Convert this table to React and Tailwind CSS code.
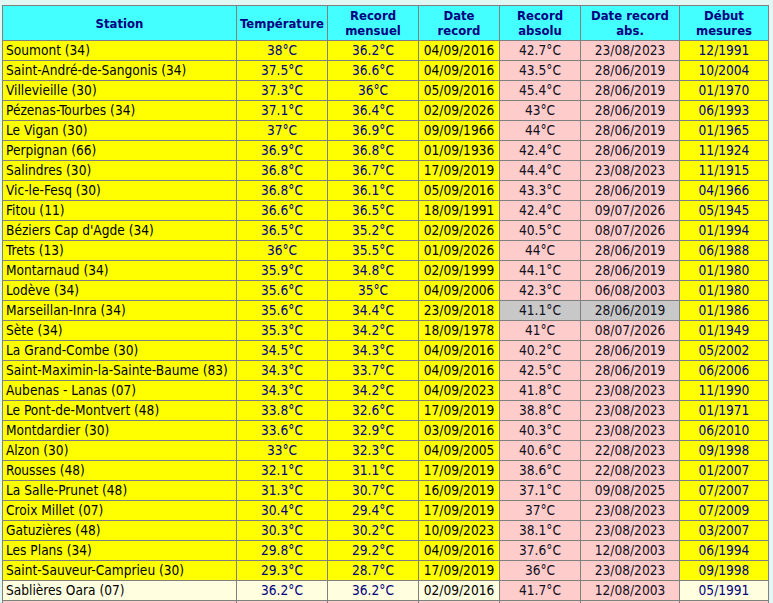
const rows = [
	['Soumont (34)', '38°C', '36.2°C', '04/09/2016', '42.7°C', '23/08/2023', '12/1991'],
	['Saint-André-de-Sangonis (34)', '37.5°C', '36.6°C', '04/09/2016', '43.5°C', '28/06/2019', '10/2004'],
	['Villevieille (30)', '37.3°C', '36°C', '05/09/2016', '45.4°C', '28/06/2019', '01/1970'],
	['Pézenas-Tourbes (34)', '37.1°C', '36.4°C', '02/09/2026', '43°C', '28/06/2019', '06/1993'],
	['Le Vigan (30)', '37°C', '36.9°C', '09/09/1966', '44°C', '28/06/2019', '01/1965'],
	['Perpignan (66)', '36.9°C', '36.8°C', '01/09/1936', '42.4°C', '28/06/2019', '11/1924'],
	['Salindres (30)', '36.8°C', '36.7°C', '17/09/2019', '44.4°C', '23/08/2023', '11/1915'],
	['Vic-le-Fesq (30)', '36.8°C', '36.1°C', '05/09/2016', '43.3°C', '28/06/2019', '04/1966'],
	['Fitou (11)', '36.6°C', '36.5°C', '18/09/1991', '42.4°C', '09/07/2026', '05/1945'],
	["Béziers Cap d'Agde (34)", '36.5°C', '35.2°C', '02/09/2026', '40.5°C', '08/07/2026', '01/1994'],
	['Trets (13)', '36°C', '35.5°C', '01/09/2026', '44°C', '28/06/2019', '06/1988'],
	['Montarnaud (34)', '35.9°C', '34.8°C', '02/09/1999', '44.1°C', '28/06/2019', '01/1980'],
	['Lodève (34)', '35.6°C', '35°C', '04/09/2006', '42.3°C', '06/08/2003', '01/1980'],
	['Marseillan-Inra (34)', '35.6°C', '34.4°C', '23/09/2018', '41.1°C', '28/06/2019', '01/1986', 'gray'],
	['Sète (34)', '35.3°C', '34.2°C', '18/09/1978', '41°C', '08/07/2026', '01/1949'],
	['La Grand-Combe (30)', '34.5°C', '34.3°C', '04/09/2016', '40.2°C', '28/06/2019', '05/2002'],
	['Saint-Maximin-la-Sainte-Baume (83)', '34.3°C', '33.7°C', '04/09/2016', '42.5°C', '28/06/2019', '06/2006'],
	['Aubenas - Lanas (07)', '34.3°C', '34.2°C', '04/09/2023', '41.8°C', '23/08/2023', '11/1990'],
	['Le Pont-de-Montvert (48)', '33.8°C', '32.6°C', '17/09/2019', '38.8°C', '23/08/2023', '01/1971'],
	['Montdardier (30)', '33.6°C', '32.9°C', '03/09/2016', '40.3°C', '23/08/2023', '06/2010'],
	['Alzon (30)', '33°C', '32.3°C', '04/09/2005', '40.6°C', '22/08/2023', '09/1998'],
	['Rousses (48)', '32.1°C', '31.1°C', '17/09/2019', '38.6°C', '22/08/2023', '01/2007'],
	['La Salle-Prunet (48)', '31.3°C', '30.7°C', '16/09/2019', '37.1°C', '09/08/2025', '07/2007'],
	['Croix Millet (07)', '30.4°C', '29.4°C', '17/09/2019', '37°C', '23/08/2023', '07/2009'],
	['Gatuzières (48)', '30.3°C', '30.2°C', '10/09/2023', '38.1°C', '23/08/2023', '03/2007'],
	['Les Plans (34)', '29.8°C', '29.2°C', '04/09/2016', '37.6°C', '12/08/2003', '06/1994'],
	['Saint-Sauveur-Camprieu (30)', '29.3°C', '28.7°C', '17/09/2019', '36°C', '23/08/2023', '09/1998'],
	['Sablières Oara (07)', '36.2°C', '36.2°C', '02/09/2016', '41.7°C', '12/08/2003', '05/1991', 'pale'],
];

const cell = 'border border-[#808080] h-[19px] p-0 leading-[19px] whitespace-nowrap overflow-hidden';

function Row({ r }) {
	const [station, temp, mens, dateRec, abs, dateAbs, debut, kind] = r;
	// pale = last station, not in the heat list
	const main = kind === 'pale' ? 'bg-[#ffffe0]' : 'bg-[#ffff00]';
	const rec = kind === 'gray' ? 'bg-[#c8c8c8]' : 'bg-[#ffcccc]';
	return (
		<tr>
			<td className={`${cell} ${main} pl-[3px] text-left text-black`}>{station}</td>
			<td className={`${cell} ${main} text-center text-[#000080]`}>{temp}</td>
			<td className={`${cell} ${main} text-center text-[#000080]`}>{mens}</td>
			<td className={`${cell} ${main} text-center text-black`}>{dateRec}</td>
			<td className={`${cell} ${rec} text-center text-[#111122]`}>{abs}</td>
			<td className={`${cell} ${rec} text-center text-[#111122]`}>{dateAbs}</td>
			<td className={`${cell} ${main} text-center text-[#000080]`}>{debut}</td>
		</tr>
	);
}

export default function App() {
	const th = 'border border-[#808080] bg-[#44ffff] text-[#000080] font-bold text-center text-[13px] leading-[15px] p-0';
	return (
		<div
			className="min-h-screen bg-[#e0f7f3] pt-[5px] pl-[2px] overflow-hidden"
			style={{ fontFamily: '"DejaVu Sans Condensed", "DejaVu Sans", Verdana, sans-serif' }}
		>
			<table className="table-fixed border-collapse text-[13.6px] w-[766px]">
				<colgroup>
					<col className="w-[234px]" />
					<col className="w-[91px]" />
					<col className="w-[91px]" />
					<col className="w-[81px]" />
					<col className="w-[81px]" />
					<col className="w-[99px]" />
					<col className="w-[89px]" />
				</colgroup>
				<thead>
					<tr className="h-[35px]">
						<th className={th}>Station</th>
						<th className={th}>Température</th>
						<th className={th}>Record<br />mensuel</th>
						<th className={th}>Date<br />record</th>
						<th className={th}>Record<br />absolu</th>
						<th className={th}>Date record<br />abs.</th>
						<th className={th}>Début<br />mesures</th>
					</tr>
				</thead>
				<tbody>
					{rows.map((r) => (
						<Row key={r[0]} r={r} />
					))}
					<tr>
						<td className={`${cell} bg-[#ffcccc]`}>&nbsp;</td>
						<td className={`${cell} bg-[#ffcccc]`}>&nbsp;</td>
						<td className={`${cell} bg-[#ffcccc]`}>&nbsp;</td>
						<td className={`${cell} bg-[#ffcccc]`}>&nbsp;</td>
						<td className={`${cell} bg-[#ffcccc]`}>&nbsp;</td>
						<td className={`${cell} bg-[#ffcccc]`}>&nbsp;</td>
						<td className={`${cell} bg-[#ffcccc]`}>&nbsp;</td>
					</tr>
				</tbody>
			</table>
		</div>
	);
}
